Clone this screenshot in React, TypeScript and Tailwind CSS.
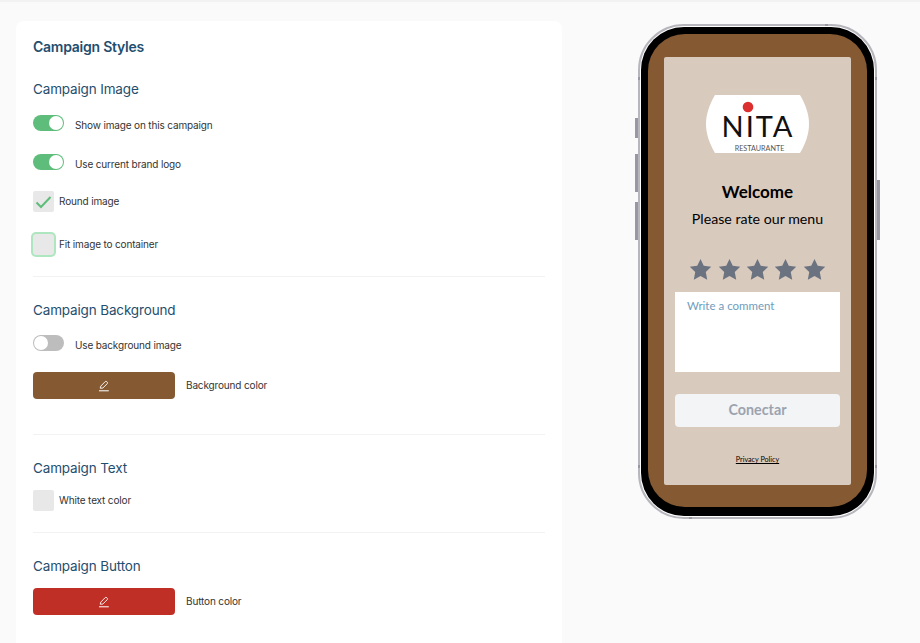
import React from 'react';

const labelClass = 'text-[10px] leading-[16px] tracking-[-0.15px] text-[#333]';

const PencilIcon: React.FC = () => (
  <svg width="12" height="12" viewBox="0 0 12 12" fill="none" stroke="white" strokeWidth={0.9} strokeLinejoin="round">
    <path d="M2.2 8.2 L2.8 6.1 L7.2 1.6 Q7.9 1 8.7 1.6 L9.3 2.3 Q9.9 3 9.2 3.7 L4.8 8.1 Z" />
    <path d="M1 10.8 H10.8" strokeWidth={1} />
  </svg>
);

const ToggleRow: React.FC<{ on?: boolean; label: string }> = ({ on, label }) => (
  <div className="flex items-start gap-[11px]">
    <div
      className={`flex h-4 w-[31px] items-center rounded-full p-px ${on ? 'justify-end bg-[#5fbd7b]' : 'justify-start bg-[#bdbdbd]'}`}
    >
      <div className="h-[14px] w-[14px] rounded-full bg-white" />
    </div>
    <span className={`pt-[2px] ${labelClass}`}>{label}</span>
  </div>
);

const Check: React.FC<{ checked?: boolean }> = ({ checked }) => (
  <div className="flex h-[21px] w-[21px] items-center justify-center rounded-[2px] bg-[#e8e8e8]">
    {checked && (
      <svg width="17" height="14" viewBox="0 0 17 14" fill="none" stroke="#5fbd7b" strokeWidth={2}>
        <path d="M1.5 7.5 L6 12 L15.5 2" />
      </svg>
    )}
  </div>
);

const ColorRow: React.FC<{ color: string; label: string }> = ({ color, label }) => (
  <div className="flex items-center gap-[11px]">
    <div className={`flex h-[27px] w-[142px] items-center justify-center rounded-[4px] ${color}`}>
      <PencilIcon />
    </div>
    <span className={`pb-[2px] ${labelClass}`}>{label}</span>
  </div>
);

const Heading: React.FC<{ children: React.ReactNode }> = ({ children }) => (
  <h3 className="text-[13.5px] leading-[20px] tracking-[-0.15px] text-[#1f4e6e]">{children}</h3>
);

const Star: React.FC = () => (
  <svg width="23" height="23" viewBox="0 0 24 24" fill="#6b7280" className="block">
    <path d="M12 1 L15.4 8.2 L23.2 9.2 L17.5 14.6 L19 22.6 L12 18.7 L5 22.6 L6.5 14.6 L.8 9.2 L8.6 8.2 Z" />
  </svg>
);

const Logo: React.FC = () => (
  <svg width="103" height="58" viewBox="0 0 103 58" className="block">
    <path d="M9 0 H94 C100 10 103 20 103 29 C103 38 100 48 94 58 H9 C3 48 0 38 0 29 C0 20 3 10 9 0 Z" fill="white" />
    <circle cx="42" cy="12" r="5.3" fill="#dc2f2f" />
    <text x="52" y="42" textAnchor="middle" fontSize="29" fill="#111" fontFamily="Lato, sans-serif" letterSpacing="2">NITA</text>
    <text x="53.5" y="56" textAnchor="middle" fontSize="7.2" fill="#555" fontFamily="Lato, sans-serif">RESTAURANTE</text>
  </svg>
);

const Phone: React.FC = () => (
  <div className="relative h-[495px] w-[239px] rounded-[46px] border-2 border-[#b8b6bd] bg-white p-[1px]">
    <div className="absolute -left-[5px] top-[92px] h-[20px] w-[3px] bg-[#9a97a5]" />
    <div className="absolute -left-[5px] top-[128px] h-[38px] w-[3px] bg-[#9a97a5]" />
    <div className="absolute -left-[5px] top-[176px] h-[38px] w-[3px] bg-[#9a97a5]" />
    <div className="absolute -right-[5px] top-[154px] h-[60px] w-[3px] bg-[#9a97a5]" />
    <div className="absolute -left-[2px] top-[51px] h-[3px] w-[2px] bg-[#9a97a5]" />
    <div className="absolute -right-[2px] top-[51px] h-[3px] w-[2px] bg-[#9a97a5]" />
    <div className="absolute -left-[2px] top-[439px] h-[3px] w-[2px] bg-[#9a97a5]" />
    <div className="absolute -right-[2px] top-[439px] h-[3px] w-[2px] bg-[#9a97a5]" />
    <div className="absolute -top-[2px] left-[185px] h-[2px] w-[3px] bg-[#9a97a5]" />
    <div className="absolute -bottom-[2px] left-[49px] h-[2px] w-[3px] bg-[#9a97a5]" />
    <div className="h-full w-full rounded-[43px] bg-black px-[7px] pb-[9px] pt-[7px]">
      <div className="h-[473px] rounded-[37px] bg-[#855a33] px-[16px] pt-[23px]">
        <div className="flex h-[428px] flex-col items-center rounded-[2px] bg-[#d9cabe] px-[11px] pt-[38px] [font-family:Lato,sans-serif]">
          <Logo />
          <div className="mt-[27px] text-[17px] font-bold leading-[24px] text-black">Welcome</div>
          <div className="mt-[3px] text-[14.2px] leading-[24px] text-black">Please rate our menu</div>
          <div className="mt-[27px] flex gap-[5.4px]">
            <Star />
            <Star />
            <Star />
            <Star />
            <Star />
          </div>
          <div className="mt-[11px] h-[80px] w-full bg-white px-[12px] pt-[6px] text-[11.5px] leading-[16px] text-[#6f9dbd]">
            Write a comment
          </div>
          <div className="mt-[22px] flex h-[33px] w-full items-center justify-center rounded-[4px] bg-[#f3f4f6] pb-[2px] text-[14.3px] font-bold text-[#9ca3af]">
            Conectar
          </div>
          <a className="mt-[27px] text-[7.2px] leading-[12px] text-black underline">Privacy Policy</a>
        </div>
      </div>
    </div>
  </div>
);

export default function App() {
  return (
    <div className="flex h-[643px] overflow-hidden border-t-2 border-[#f2f2f2] bg-[#fafafa] pl-[16px] pt-[19px] [font-family:Inter,sans-serif]">
      <div className="w-[546px] shrink-0 rounded-t-[8px] bg-white px-[17px] pt-[16px]">
        <h2 className="text-[14px] font-semibold leading-[20px] tracking-[-0.25px] text-[#1f4e6e]">Campaign Styles</h2>

        <div className="mt-[22px]">
          <Heading>Campaign Image</Heading>
        </div>
        <div className="mt-[16px]">
          <ToggleRow on label="Show image on this campaign" />
        </div>
        <div className="mt-[21px]">
          <ToggleRow on label="Use current brand logo" />
        </div>
        <div className="mt-[19px] flex items-center gap-[5px]">
          <Check checked />
          <span className={`pb-[2px] ${labelClass}`}>Round image</span>
        </div>
        <div className="mt-[22px] flex items-center gap-[5px]">
          <div className="h-[21px] w-[21px] rounded-[3px] bg-[#e8e8e8] shadow-[0_0_0_2px_#aee6bf]" />
          <span className={`pb-[2px] ${labelClass}`}>Fit image to container</span>
        </div>
        <hr className="mt-[21px] border-[#f2f2f2]" />

        <div className="mt-[23px]">
          <Heading>Campaign Background</Heading>
        </div>
        <div className="mt-[15px]">
          <ToggleRow label="Use background image" />
        </div>
        <div className="mt-[19px]">
          <ColorRow color="bg-[#855a33]" label="Background color" />
        </div>
        <hr className="mt-[35px] border-[#f2f2f2]" />

        <div className="mt-[23px]">
          <Heading>Campaign Text</Heading>
        </div>
        <div className="mt-[12px] flex items-center gap-[5px]">
          <Check />
          <span className={`pb-[2px] ${labelClass}`}>White text color</span>
        </div>
        <hr className="mt-[21px] border-[#f2f2f2]" />

        <div className="mt-[23px]">
          <Heading>Campaign Button</Heading>
        </div>
        <div className="mt-[12px]">
          <ColorRow color="bg-[#c02f26]" label="Button color" />
        </div>
      </div>

      <div className="ml-[76px] pt-[3px]">
        <Phone />
      </div>
    </div>
  );
}
